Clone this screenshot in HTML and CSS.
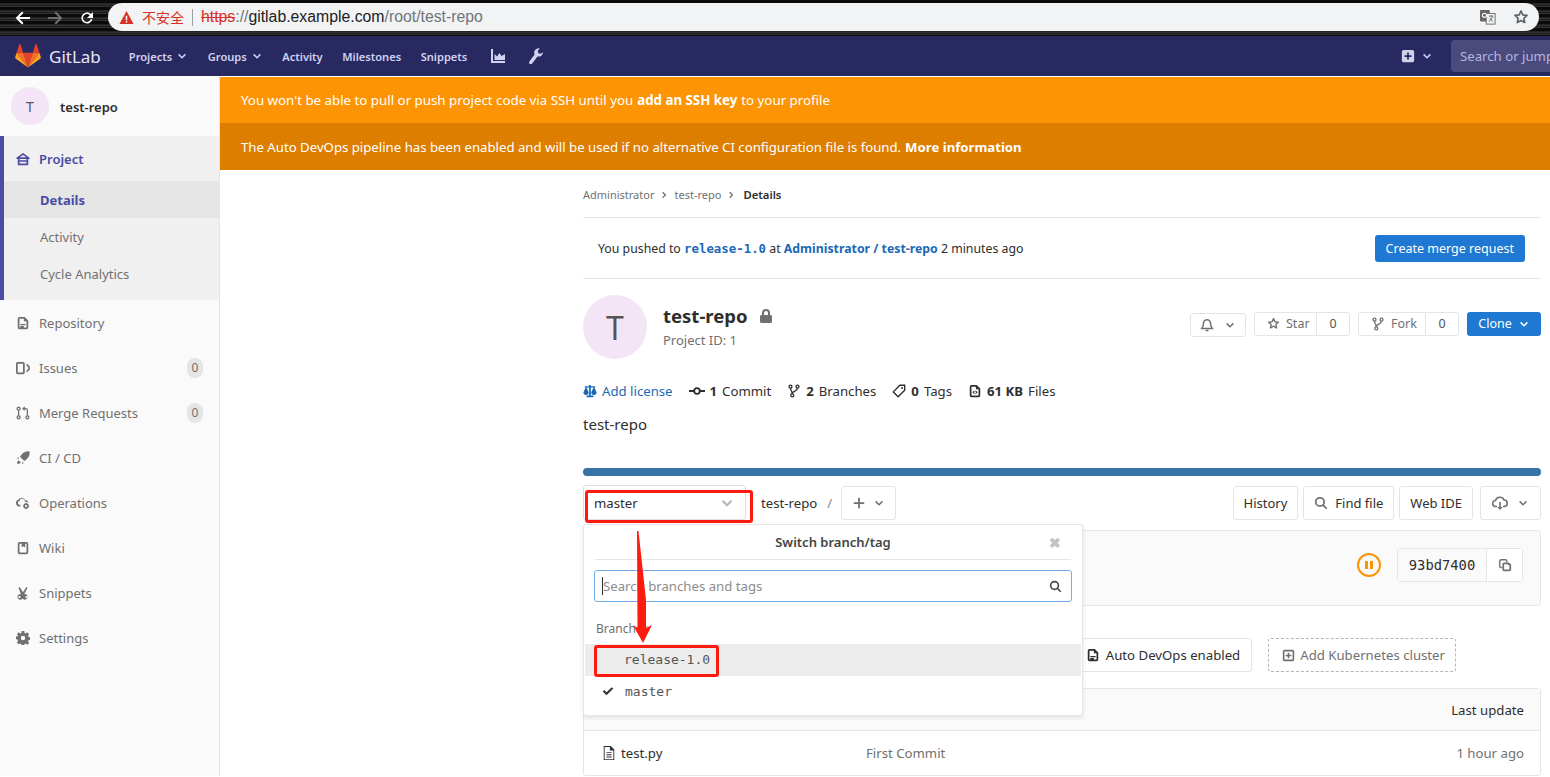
FILE: index.html
```html
<!DOCTYPE html>
<html lang="en">
<head>
  <meta charset="UTF-8" />
  <meta name="viewport" content="width=device-width, initial-scale=1.0" />
  <title>test-repo</title>
  <link rel="stylesheet" href="styles.css">
</head>
<body>
  <svg class="defs" width="0" height="0">
    <symbol id="chev" viewBox="0 0 16 16"><path d="M3.5 5.8 8 10.3l4.5-4.5" fill="none" stroke="currentColor" stroke-width="2"/></symbol>
    <symbol id="home" viewBox="0 0 16 16"><path fill-rule="evenodd" d="M8 1 .5 6.5V8H2v7h12V8h1.500V6.500zM8 3.400 11.800 6H4.200zM4 8h8v1.500H4zm0 3h8v2H4z"/></symbol>
    <symbol id="doc" viewBox="0 0 16 16"><path fill-rule="evenodd" d="M4 1h6l4 4v8a2 2 0 0 1-2 2H4a2 2 0 0 1-2-2V3a2 2 0 0 1 2-2zm0 2v10h8V6H9V3zm1 6h6v1.500H5zm0 2.500h4V13H5z"/></symbol>
    <symbol id="issues" viewBox="0 0 16 16"><path fill-rule="evenodd" d="M2 1h6a2 2 0 0 1 2 2v10a2 2 0 0 1-2 2H2a2 2 0 0 1-2-2V3a2 2 0 0 1 2-2zm0 2v10h6V3zm10 0c2.500 1 4 3 4 5s-1.500 4-4 5v-2c1-.7 2-1.800 2-3s-1-2.300-2-3z"/></symbol>
    <symbol id="merge" viewBox="0 0 16 16"><g fill="none" stroke="currentColor" stroke-width="1.500"><circle cx="3" cy="3" r="1.700"/><circle cx="3" cy="13" r="1.700"/><circle cx="13" cy="13" r="1.700"/><path d="M3 5v6M13 11V5a2 2 0 0 0-2-2H8.500"/><path d="M10 1 8 3l2 2"/></g></symbol>
    <symbol id="rocket" viewBox="0 0 16 16"><path d="M15.500.5c-4-.5-7 1-9.500 4L4.500 6.500l5 5 2-1.500c3-2.500 4.500-5.500 4-9.500zM3.500 7.500 1 8l1.500 1.500zM8.500 12.500 8 15l-1.500-1.500zM3 10.500l2.500 2.500-3 2-1.500-1.500z"/></symbol>
    <symbol id="cloudgear" viewBox="0 0 16 16"><path d="M7 2.500a4 4 0 0 1 3.700 2.500 3 3 0 0 1 3.300 2h-2a1.500 1.500 0 0 0-2-.5 2.500 2.500 0 0 0-3-3A2.500 2.500 0 0 0 4 6 2 2 0 0 0 4 10h1v2H4a4 4 0 0 1-1.500-7.700A4.500 4.500 0 0 1 7 2.500z"/><circle cx="11.500" cy="11.500" r="2.200" fill="none" stroke="currentColor" stroke-width="1.800"/><path d="M11 7.800h1v1.500h-1zM11 13.700h1v1.500h-1zM7.800 11h1.500v1H7.800zM13.700 11h1.500v1h-1.500z"/></symbol>
    <symbol id="book" viewBox="0 0 16 16"><path fill-rule="evenodd" d="M4 1h8a2 2 0 0 1 2 2v10a2 2 0 0 1-2 2H4a2 2 0 0 1-2-2V3a2 2 0 0 1 2-2zm0 2v10h8V3h-1.500v4.500L8.500 6l-2 1.500V3z"/></symbol>
    <symbol id="scissors" viewBox="0 0 16 16"><path d="M4.200 1 8 7l3.800-6 1.400 1L9.300 9.400a3.200 3.200 0 1 1-1.600 1l-.2-.4-.2.400a3.200 3.200 0 1 1-1.600-1L2.800 2z"/><circle cx="4" cy="12.600" r="1.300" fill="#fafafa"/><circle cx="12" cy="12.600" r="1.300" fill="#fafafa"/></symbol>
    <symbol id="gear" viewBox="0 0 16 16"><path fill-rule="evenodd" d="M6.500 0h3l.4 2.300 1.200.5L13 1.500 15 3.600l-1.300 1.900.5 1.200 2.300.4v3l-2.300.4-.5 1.200 1.300 1.900-2 2-2-1.300-1.200.5-.4 2.300h-3l-.4-2.300-1.200-.5L3 15 1 12.900l1.300-1.900-.5-1.200L-.5 9.400v-3l2.300-.4.500-1.200L1 3.600l2-2.100 1.900 1.300 1.200-.5zM8 5.500a2.500 2.500 0 1 0 0 5 2.500 2.500 0 0 0 0-5z"/></symbol>
    <symbol id="lock" viewBox="0 0 16 16"><path fill-rule="evenodd" d="M8 1a4 4 0 0 1 4 4v2h.5A1.500 1.500 0 0 1 14 8.500v5a1.500 1.500 0 0 1-1.500 1.500h-9A1.500 1.500 0 0 1 2 13.500v-5A1.500 1.500 0 0 1 3.500 7H4V5a4 4 0 0 1 4-4zm0 2a2 2 0 0 0-2 2v2h4V5a2 2 0 0 0-2-2z"/></symbol>
    <symbol id="scale" viewBox="0 0 16 16"><path d="M7 1h2v1.500h5V4h-1l2.500 5.500a3 3 0 0 1-6 0L12 4H9v9h3v2H4v-2h3V4H4l2.500 5.500a3 3 0 0 1-6 0L3 4H2V2.500h5z"/></symbol>
    <symbol id="commit" viewBox="0 0 16 16"><circle cx="8" cy="8" r="2.800" fill="none" stroke="currentColor" stroke-width="1.800"/><path d="M0 7h5v2H0zM11 7h5v2h-5z"/></symbol>
    <symbol id="fork" viewBox="0 0 16 16"><g fill="none" stroke="currentColor" stroke-width="1.500"><circle cx="4" cy="3" r="1.700"/><circle cx="12" cy="3" r="1.700"/><circle cx="6" cy="13" r="1.700"/><path d="M4 4.700c0 3 2 3.500 2 6.600M12 4.700C12 8 8 8 6 10"/></g></symbol>
    <symbol id="tag" viewBox="0 0 16 16"><path fill="none" stroke="currentColor" stroke-width="1.600" d="M9 1.500h5.500V7l-7.500 7.500L1.500 9z"/><circle cx="11.500" cy="4.500" r="1.100"/></symbol>
    <symbol id="files" viewBox="0 0 16 16"><path fill-rule="evenodd" d="M4 1h6l4 4v8a2 2 0 0 1-2 2H4a2 2 0 0 1-2-2V3a2 2 0 0 1 2-2zm0 2v10h8V6H9V3z"/><path d="M7 7.500 5 9.500l2 2 .8-.8-1.200-1.200 1.200-1.200zM9 7.500l2 2-2 2-.8-.8 1.200-1.200-1.200-1.200z"/></symbol>
    <symbol id="bell" viewBox="0 0 16 16"><path fill="none" stroke="currentColor" stroke-width="1.700" d="M8 2a4 4 0 0 1 4 4c0 3 .5 4 2 6H2c1.500-2 2-3 2-6a4 4 0 0 1 4-4z"/><path d="M6 13.500h4a2 2 0 0 1-4 0z"/></symbol>
    <symbol id="star" viewBox="0 0 16 16"><path fill="none" stroke="currentColor" stroke-width="1.700" stroke-linejoin="round" d="m8 2 1.800 3.900 4.200.5-3.100 2.900.8 4.200L8 11.400l-3.700 2.100.8-4.200L2 6.400l4.200-.5z"/></symbol>
    <symbol id="search" viewBox="0 0 16 16"><circle cx="6.800" cy="6.800" r="4.800" fill="none" stroke="currentColor" stroke-width="2"/><path d="m10.500 9.100 4.700 4.700-1.400 1.400-4.700-4.700z"/></symbol>
    <symbol id="cloud" viewBox="0 0 16 16"><path fill="none" stroke="currentColor" stroke-width="1.600" d="M5 11.500H4a3 3 0 0 1-.5-6A4.500 4.500 0 0 1 12 5a3.200 3.200 0 0 1 0 6.500h-1"/><path d="M7.200 7h1.600v5h2L8 15l-2.800-3h2z"/></symbol>
    <symbol id="copy" viewBox="0 0 16 16"><path fill="none" stroke="currentColor" stroke-width="1.600" d="M5 11H3.500A1.500 1.500 0 0 1 2 9.500v-6A1.500 1.500 0 0 1 3.500 2h5A1.500 1.500 0 0 1 10 3.500V5"/><path fill-rule="evenodd" d="M7 5h5.500L15 7.500V13a2 2 0 0 1-2 2H7a2 2 0 0 1-2-2V7a2 2 0 0 1 2-2zm0 2v6h6V8h-2V7z"/></symbol>
    <symbol id="plusbox" viewBox="0 0 16 16"><path fill-rule="evenodd" d="M3 1h10a2 2 0 0 1 2 2v10a2 2 0 0 1-2 2H3a2 2 0 0 1-2-2V3a2 2 0 0 1 2-2zm4 3v3H4v2h3v3h2V9h3V7H9V4z"/></symbol>
    <symbol id="plusline" viewBox="0 0 16 16"><path fill-rule="evenodd" d="M3 1h10a2 2 0 0 1 2 2v10a2 2 0 0 1-2 2H3a2 2 0 0 1-2-2V3a2 2 0 0 1 2-2zm0 2v10h10V3zm4 1.500h2V7h2.500v2H9v2.500H7V9H4.500V7H7z"/></symbol>
    <symbol id="textfile" viewBox="0 0 16 16"><path fill-rule="evenodd" d="M3 0h7l4 4v12H2V0zm0 1v14h10V5H9V1zM5 7h6v1H5zm0 2.500h6v1H5zM5 12h6v1H5z"/></symbol>
  </svg>

  <!-- browser toolbar -->
  <div class="chrome">
    <div class="chrome-btns">
      <svg class="chrome-ico" viewBox="0 0 16 16"><path d="M15 7H4.500l4-4L7 1.600 .6 8 7 14.400 8.500 13l-4-4H15z"/></svg>
      <svg class="chrome-ico off" viewBox="0 0 16 16"><path d="M1 7h10.500l-4-4L9 1.600 15.400 8 9 14.400 7.500 13l4-4H1z"/></svg>
      <svg class="chrome-ico" viewBox="0 0 16 16"><path d="M13.600 2.400 12 4a5.600 5.600 0 1 0 1.500 5.200h-1.900A3.900 3.900 0 1 1 10.700 5.300L8 8h6V2z"/></svg>
    </div>
    <div class="omnibox">
      <svg class="warn" viewBox="0 0 16 16"><path fill="#d93025" d="M8 1 .5 15h15z"/><path fill="#fff" d="M7.200 6h1.600v4.800H7.200zM7.200 11.800h1.600v1.500H7.200z"/></svg>
      <span class="unsafe">不安全</span>
      <span class="sep"></span>
      <span class="url"><s class="proto">https</s><span class="dim">://</span>gitlab.example.com<span class="dim">/root/test-repo</span></span>
      <svg class="translate" viewBox="0 0 18 18"><rect x="0" y="1" width="11" height="13" rx="1" fill="#666"/><rect x="7" y="5" width="10" height="12" fill="#f1f3f4" stroke="#666"/><path d="M10 8h5M12.500 7v1M14 8c-.5 3-2 5-4 6M11 10c.5 2 2 3 3.500 4" fill="none" stroke="#666"/><circle cx="5" cy="7" r="2.300" fill="none" stroke="#fff" stroke-width="1.200"/></svg>
      <svg class="bookmark" viewBox="0 0 16 16"><use href="#star"/></svg>
    </div>
  </div>

  <header class="navbar">
    <svg class="logo" viewBox="0 0 36 36"><path fill="#e24329" d="M18 34 24.600 13.600H11.400z"/><path fill="#fc6d26" d="M18 34 11.400 13.600H2.200z"/><path fill="#fca326" d="M2.200 13.600.2 19.800c-.2.600 0 1.200.5 1.500L18 34z"/><path fill="#e24329" d="M2.200 13.600h9.200L7.400 1.400c-.2-.6-1-.6-1.200 0z"/><path fill="#fc6d26" d="M18 34l6.600-20.400h9.200z"/><path fill="#fca326" d="M33.800 13.600l2 6.200c.2.600 0 1.200-.5 1.500L18 34z"/><path fill="#e24329" d="M33.800 13.600h-9.200l4-12.200c.2-.6 1-.6 1.200 0z"/></svg>
    <span class="brand">GitLab</span>
    <nav class="nav-links">
      <a class="nav-link">Projects <svg class="ico-12"><use href="#chev"/></svg></a>
      <a class="nav-link">Groups <svg class="ico-12"><use href="#chev"/></svg></a>
      <a class="nav-link">Activity</a>
      <a class="nav-link">Milestones</a>
      <a class="nav-link">Snippets</a>
      <a class="nav-link nav-icon"><svg class="ico-16" viewBox="0 0 16 16"><path d="M1 1h2v12h12v2H1zM4.500 6l2.500 2.500L9.500 5l2 3 3.500-2v6H4.500z"/></svg></a>
      <a class="nav-link nav-icon"><svg class="ico-16" viewBox="0 0 16 16"><path d="M15 4.300A4.300 4.300 0 0 1 9.500 8.400L4.200 15.500a1.700 1.700 0 0 1-2.800-2L6.600 6.500A4.300 4.300 0 0 1 11.800.6L9.700 3l.7 2.200 2.200.6z"/></svg></a>
    </nav>
    <div class="nav-right">
      <svg class="ico-14"><use href="#plusbox"/></svg>
      <svg class="ico-12"><use href="#chev"/></svg>
      <div class="nav-search">Search or jump</div>
    </div>
  </header>

  <div class="layout">
    <aside class="sidebar">
      <div class="side-head">
        <span class="side-avatar">T</span>
        <span class="side-title">test-repo</span>
      </div>
      <div class="side-active">
        <a class="side-item current"><svg class="ico-14"><use href="#home"/></svg>Project</a>
        <a class="side-sub selected">Details</a>
        <a class="side-sub">Activity</a>
        <a class="side-sub">Cycle Analytics</a>
      </div>
      <a class="side-item"><svg class="ico-14"><use href="#doc"/></svg>Repository</a>
      <a class="side-item"><svg class="ico-14"><use href="#issues"/></svg>Issues<span class="badge">0</span></a>
      <a class="side-item"><svg class="ico-14"><use href="#merge"/></svg>Merge Requests<span class="badge">0</span></a>
      <a class="side-item"><svg class="ico-14"><use href="#rocket"/></svg>CI / CD</a>
      <a class="side-item"><svg class="ico-14"><use href="#cloudgear"/></svg>Operations</a>
      <a class="side-item"><svg class="ico-14"><use href="#book"/></svg>Wiki</a>
      <a class="side-item"><svg class="ico-14"><use href="#scissors"/></svg>Snippets</a>
      <a class="side-item"><svg class="ico-14"><use href="#gear"/></svg>Settings</a>
    </aside>

    <main class="main">
      <div class="banner warn-one">You won't be able to pull or push project code via SSH until you <b>add an SSH key</b> to your profile</div>
      <div class="banner warn-two">The Auto DevOps pipeline has been enabled and will be used if no alternative CI configuration file is found. <b>More information</b></div>

      <div class="content">
        <div class="crumbs">
          <span>Administrator</span><svg class="crumb-sep"><use href="#chev"/></svg><span>test-repo</span><svg class="crumb-sep"><use href="#chev"/></svg><b>Details</b>
        </div>

        <div class="pushed">
          <span>You pushed to <code class="mono-link">release-1.0</code> at <b class="link">Administrator / test-repo</b> 2 minutes ago</span>
          <a class="btn-blue">Create merge request</a>
        </div>

        <div class="project-head">
          <span class="big-avatar">T</span>
          <div class="project-name">
            <h1>test-repo <svg class="lock"><use href="#lock"/></svg></h1>
            <p>Project ID: 1</p>
          </div>
          <div class="project-actions">
            <a class="btn bell"><svg class="ico-14"><use href="#bell"/></svg><svg class="ico-12"><use href="#chev"/></svg></a>
            <div class="btn-pair">
              <a class="btn"><svg class="ico-13"><use href="#star"/></svg>Star</a><span class="count">0</span>
            </div>
            <div class="btn-pair">
              <a class="btn"><svg class="ico-14"><use href="#fork"/></svg>Fork</a><span class="count">0</span>
            </div>
            <a class="btn-blue clone">Clone <svg class="ico-12"><use href="#chev"/></svg></a>
          </div>
        </div>

        <div class="stats">
          <span class="stat link"><svg class="ico-14"><use href="#scale"/></svg>Add license</span>
          <span class="stat"><svg class="ico-16"><use href="#commit"/></svg><b>1</b> Commit</span>
          <span class="stat"><svg class="ico-14"><use href="#fork"/></svg><b>2</b> Branches</span>
          <span class="stat"><svg class="ico-14"><use href="#tag"/></svg><b>0</b> Tags</span>
          <span class="stat"><svg class="ico-14"><use href="#files"/></svg><b>61 KB</b> Files</span>
        </div>

        <p class="descr">test-repo</p>
        <div class="lang-bar"></div>

        <div class="tree-bar">
          <a class="branch-select">master <svg class="ico-16"><use href="#chev"/></svg></a>
          <span class="tree-path">test-repo</span>
          <span class="tree-slash">/</span>
          <a class="btn tall plus"><svg class="ico-14" viewBox="0 0 16 16"><path d="M7 2h2v5h5v2H9v5H7V9H2V7h5z"/></svg><svg class="ico-12"><use href="#chev"/></svg></a>
          <div class="tree-right">
            <a class="btn tall">History</a>
            <a class="btn tall"><svg class="ico-14"><use href="#search"/></svg>Find file</a>
            <a class="btn tall">Web IDE</a>
            <a class="btn tall cloud-btn"><svg class="ico-16"><use href="#cloud"/></svg><svg class="ico-12"><use href="#chev"/></svg></a>
          </div>
        </div>

        <div class="commit-box">
          <span class="pause"><i></i><i></i></span>
          <div class="sha-group">
            <span class="sha">93bd7400</span>
            <span class="sha-copy"><svg class="ico-14"><use href="#copy"/></svg></span>
          </div>
        </div>

        <div class="stat-btns">
          <a class="btn tall"><svg class="ico-14 dark"><use href="#doc"/></svg>Auto DevOps enabled</a>
          <a class="btn tall dashed"><svg class="ico-13"><use href="#plusline"/></svg>Add Kubernetes cluster</a>
        </div>

        <div class="files">
          <div class="files-head">Last update</div>
          <div class="files-row">
            <span class="file-name"><svg class="ico-14 dark"><use href="#textfile"/></svg>test.py</span>
            <span class="file-msg">First Commit</span>
            <span class="file-time">1 hour ago</span>
          </div>
        </div>

        <!-- branch dropdown, open over the page -->
        <div class="dropdown">
          <div class="dd-title">Switch branch/tag <span class="dd-close">✖</span></div>
          <div class="dd-search">
            <span class="caret"></span>Search branches and tags
            <svg class="ico-13"><use href="#search"/></svg>
          </div>
          <div class="dd-label">Branches</div>
          <div class="dd-item hover">release-1.0</div>
          <div class="dd-item"><svg class="check" viewBox="0 0 16 16"><path d="M1 8.500 3 6.500 6 9.500 13 3l2 2-9 8.500z"/></svg>master</div>
        </div>
      </div>
    </main>
  </div>

  <!-- red annotations drawn on the screenshot -->
  <div class="mark mark-one"></div>
  <div class="mark mark-two"></div>
  <svg class="arrow" viewBox="0 0 30 120"><path d="M9 0H10.500L18 69V97L24 94 15 112 5 94 9.500 97z" fill="#ff1a0f"/></svg>
</body>
</html>
```

FILE: styles.css
```css
* {
  box-sizing: border-box;
}

body {
  margin: 0;
  width: 1550px;
  height: 777px;
  overflow: hidden;
  position: relative;
  background-color: #fff;
  font-family: "Noto Sans", sans-serif;
  font-size: 14px;
  color: #2e2e2e;
}

.defs {
  position: absolute;
}

svg {
  fill: currentColor;
  flex: none;
}

.ico-12 { width: 12px; height: 12px; }
.ico-13 { width: 13px; height: 13px; }
.ico-14 { width: 14px; height: 14px; }
.ico-16 { width: 16px; height: 16px; }

b {
  font-weight: 700;
}

.link {
  color: #1b69b6;
}

/* Browser toolbar */
.chrome {
  height: 36px;
  display: flex;
  align-items: center;
  padding-right: 11px;
  background: repeating-linear-gradient(to bottom, #0a0a0a 0, #0a0a0a 3px, #3c3c3c 4px, #111 6px, #555 7px);
}

.chrome-btns {
  width: 108px;
  display: flex;
  gap: 16px;
  padding-left: 15px;
  color: #fff;
}

.chrome-ico {
  width: 16px;
  height: 16px;
}

.chrome-ico.off {
  color: #6e6e6e;
}

.omnibox {
  flex: 1;
  height: 28px;
  margin-top: -2px;
  display: flex;
  align-items: center;
  padding: 0 10px 0 11px;
  background-color: #f1f3f4;
  border-radius: 14px;
  font-family: "Liberation Sans", "Noto Sans CJK SC", sans-serif;
  font-size: 15.800px;
  color: #202124;
}

.warn {
  width: 15px;
  height: 15px;
}

.unsafe {
  margin-left: 8px;
  font-family: "Noto Sans CJK SC", sans-serif;
  font-size: 14px;
  color: #d93025;
}

.sep {
  width: 1px;
  height: 17px;
  margin: 0 8px 0 8px;
  background-color: #9aa0a6;
}

.url {
  flex: 1;
}

.proto {
  color: #d93025;
}

.dim {
  color: #70757a;
}

.translate {
  width: 16px;
  height: 16px;
  margin-right: 17px;
}

.bookmark {
  width: 16px;
  height: 16px;
  color: #5f6368;
}

/* Top navbar */
.navbar {
  height: 40px;
  display: flex;
  align-items: center;
  padding-left: 15px;
  background-color: #292961;
  color: #d1d1f0;
}

.logo {
  width: 26px;
  height: 26px;
}

.brand {
  margin-left: 8px;
  font-size: 17px;
  color: #e6e6f5;
}

.nav-links {
  display: flex;
  align-items: center;
  gap: 19.500px;
  margin-left: 28px;
}

.nav-link {
  display: flex;
  align-items: center;
  gap: 4px;
  font-size: 11.100px;
  font-weight: 600;
}

.nav-icon {
  margin-left: 3px;
}

.nav-right {
  margin-left: auto;
  display: flex;
  align-items: center;
  gap: 6px;
}

.nav-search {
  width: 99px;
  height: 32px;
  margin-left: 12px;
  padding: 6px 0 6px 9px;
  overflow: hidden;
  background-color: #4a4a7c;
  border-radius: 4px 0 0 4px;
  font-size: 13.200px;
  line-height: 20px;
  color: #b5b5e0;
  white-space: nowrap;
}

/* Layout */
.layout {
  display: flex;
  margin-top: 1px;
}

.sidebar {
  width: 220px;
  height: 700px;
  flex: none;
  margin-top: -1px;
  background-color: #fafafa;
  border-right: 1px solid #e5e5e5;
  font-size: 13px;
  color: #707070;
}

.side-head {
  height: 60px;
  display: flex;
  align-items: center;
  padding-left: 11px;
}

.side-avatar {
  width: 38px;
  height: 38px;
  display: flex;
  align-items: center;
  justify-content: center;
  background-color: #f3e5f5;
  border: 1px solid #f0e8f2;
  border-radius: 50%;
  font-size: 14px;
  color: #555;
}

.side-title {
  margin-left: 11px;
  padding-top: 2px;
  font-weight: 600;
  color: #2e2e2e;
}

.side-active {
  height: 164px;
  background-color: #f0f0f0;
  border-left: 4px solid #4b4ba3;
}

.side-item {
  height: 45px;
  display: flex;
  align-items: center;
  padding: 0 16px;
  gap: 9px;
}

.side-active .side-item {
  padding-left: 12px;
}

.side-item.current {
  color: #4b4ba3;
  font-weight: 600;
}

.side-sub {
  height: 37px;
  display: flex;
  align-items: center;
  padding-left: 36px;
}

.side-sub.selected {
  background-color: #e5e5e5;
  color: #4b4ba3;
  font-weight: 700;
}

.badge {
  margin-left: auto;
  width: 16px;
  height: 20px;
  display: flex;
  align-items: center;
  justify-content: center;
  background-color: #e5e5e5;
  border-radius: 8px;
  font-size: 12px;
}

.main {
  flex: 1;
  min-width: 0;
}

.banner {
  display: flex;
  align-items: center;
  gap: 0.3em;
  padding-left: 21px;
  color: #fff;
}

.warn-one {
  height: 46px;
  background-color: #fc9403;
  font-size: 13.300px;
}

.warn-two {
  height: 47px;
  background-color: #de7e00;
  font-size: 13.200px;
}

/* Page content */
.content {
  position: relative;
  height: 607px;
  margin-left: 363px;
  margin-right: 9px;
  font-size: 13.200px;
}

.crumbs {
  height: 48px;
  display: flex;
  align-items: center;
  padding-top: 2px;
  border-bottom: 1px solid #e5e5e5;
  font-size: 11px;
  color: #707070;
}

.crumbs b {
  font-size: 11.300px;
  font-weight: 600;
  color: #2e2e2e;
}

.crumb-sep {
  width: 10px;
  height: 10px;
  margin: 0 5px;
  transform: rotate(-90deg);
}

.crumb-sep:last-of-type {
  margin-right: 7px;
}

.pushed {
  height: 61px;
  display: flex;
  align-items: center;
  justify-content: space-between;
  padding: 0 16px 0 15px;
  border-bottom: 1px solid #e5e5e5;
  font-size: 12.300px;
}

.mono-link {
  font-family: "DejaVu Sans Mono", monospace;
  font-size: 12.400px;
  font-weight: 700;
  color: #1b69b6;
}

.btn-blue {
  display: flex;
  align-items: center;
  justify-content: center;
  gap: 6px;
  height: 27px;
  padding: 0 11px;
  background-color: #1f78d1;
  border-radius: 3px;
  font-size: 12.500px;
  color: #fff;
}

.project-head {
  display: flex;
  margin-top: 16px;
}

.big-avatar {
  width: 64px;
  height: 64px;
  display: flex;
  align-items: center;
  justify-content: center;
  background-color: #f3e5f5;
  border-radius: 50%;
  font-size: 32px;
  color: #555;
}

.project-name {
  margin-left: 16px;
}

.project-name h1 {
  margin: 6px 0 0;
  display: flex;
  align-items: center;
  gap: 4px;
  font-size: 18.500px;
  line-height: 30px;
  font-weight: 700;
}

.lock {
  width: 16px;
  height: 16px;
  margin-left: 6px;
  color: #707070;
}

.project-name p {
  margin: 0;
  font-size: 13px;
  line-height: 18px;
  color: #707070;
}

.project-actions {
  margin-left: auto;
  height: 25px;
  margin-top: 16px;
  display: flex;
  align-items: center;
  gap: 8px;
  font-size: 12.500px;
}

.btn {
  height: 24px;
  display: flex;
  align-items: center;
  gap: 7px;
  padding: 0 12px;
  background-color: #fff;
  border: 1px solid #e5e5e5;
  border-radius: 3px;
  color: #707070;
  white-space: nowrap;
}

.btn.tall {
  height: 34px;
  color: #2e2e2e;
}

.btn.tall > svg {
  color: #707070;
}

.btn.bell {
  margin-top: 2px;
  width: 56px;
  justify-content: center;
  gap: 10px;
  color: #707070;
}

.btn-pair {
  display: flex;
}

.btn-pair .btn {
  width: 63px;
  padding: 0 0 0 12px;
  gap: 6px;
  border-radius: 3px 0 0 3px;
}

.btn-pair + .btn-pair .btn {
  width: 68px;
}

.count {
  width: 33px;
  height: 24px;
  display: flex;
  align-items: center;
  justify-content: center;
  border: 1px solid #e5e5e5;
  border-left: 0;
  border-radius: 0 3px 3px 0;
  color: #555;
}

.btn-blue.clone {
  width: 74px;
  height: 24px;
}

.stats {
  display: flex;
  align-items: center;
  gap: 16px;
  margin-top: 23px;
  height: 18px;
}

.stat {
  display: flex;
  align-items: center;
  gap: 5px;
}

.descr {
  margin: 14px 0 0;
  font-size: 15px;
  line-height: 20px;
}

.lang-bar {
  height: 8px;
  margin-top: 34px;
  background-color: #3572a5;
  border-radius: 4px;
}

.tree-bar {
  display: flex;
  align-items: center;
  margin-top: 9px;
}

.branch-select {
  width: 163px;
  height: 35px;
  display: flex;
  align-items: center;
  justify-content: space-between;
  padding: 0 10px;
  border: 1px solid #dfdfdf;
  border-radius: 3px;
}

.branch-select svg {
  color: #b5b5b5;
}

.tree-path {
  margin-left: 15px;
}

.tree-slash {
  margin: 0 9px 0 10px;
  color: #888;
}

.btn.plus {
  gap: 7px;
  padding: 0 10px;
}

.tree-right {
  margin-left: auto;
  display: flex;
  gap: 5px;
  font-size: 13px;
}

.tree-right .btn {
  padding: 0 10px;
  gap: 7px;
}

.tree-right .btn.cloud-btn {
  margin-left: 2px;
  gap: 9px;
  padding: 0 11px;
}

.commit-box {
  height: 76px;
  margin-top: 10px;
  display: flex;
  align-items: center;
  justify-content: flex-end;
  padding-right: 17px;
  padding-bottom: 7px;
  background-color: #fafafa;
  border: 1px solid #e5e5e5;
  border-radius: 3px;
}

.pause {
  width: 24px;
  height: 24px;
  display: flex;
  align-items: center;
  justify-content: center;
  gap: 2px;
  border: 2px solid #fc9403;
  border-radius: 50%;
}

.pause i {
  width: 3px;
  height: 8px;
  background-color: #fc9403;
}

.sha-group {
  display: flex;
  height: 34px;
  margin-left: 16px;
  border: 1px solid #e5e5e5;
  border-radius: 3px;
}

.sha {
  width: 89px;
  display: flex;
  align-items: center;
  justify-content: center;
  background-color: #fafafa;
  border-right: 1px solid #e5e5e5;
  font-family: "DejaVu Sans Mono", monospace;
  font-size: 13.800px;
}

.sha-copy {
  width: 35px;
  display: flex;
  align-items: center;
  justify-content: center;
  background-color: #fff;
  color: #707070;
}

.stat-btns {
  display: flex;
  justify-content: flex-end;
  gap: 16px;
  padding-right: 85px;
  margin-top: 32px;
}

.stat-btns .btn {
  gap: 6px;
  padding: 0 11px;
}

.stat-btns .btn.dashed {
  gap: 5px;
  padding: 0 10px 0 13px;
  border-style: dashed;
  border-color: #b5b5b5;
  color: #707070;
}

.btn.tall > svg.dark {
  color: #2e2e2e;
}

.files {
  margin-top: 16px;
  border: 1px solid #e5e5e5;
  border-radius: 3px;
}

.files-head {
  height: 42px;
  display: flex;
  align-items: center;
  justify-content: flex-end;
  padding-right: 16px;
  background-color: #fafafa;
  border-bottom: 1px solid #e5e5e5;
}

.files-row {
  height: 44px;
  display: flex;
  align-items: center;
  padding: 0 16px 0 18px;
}

.file-name {
  width: 264px;
  display: flex;
  align-items: center;
  gap: 5px;
}

.file-msg,
.file-time {
  color: #707070;
}

.file-time {
  margin-left: auto;
}

/* Branch dropdown */
.dropdown {
  position: absolute;
  left: 0;
  top: 354px;
  width: 500px;
  height: 192px;
  padding: 0 1px;
  background-color: #fff;
  border: 1px solid #e5e5e5;
  border-radius: 3px;
  box-shadow: 0 2px 4px rgba(0, 0, 0, 0.1);
}

.dd-title {
  position: relative;
  height: 35px;
  margin: 0 10px;
  display: flex;
  align-items: center;
  justify-content: center;
  border-bottom: 1px solid #e5e5e5;
  font-weight: 600;
  font-size: 13px;
  color: #444;
}

.dd-close {
  position: absolute;
  right: 10px;
  font-size: 14px;
  color: #c4c4c4;
}

.dd-search {
  height: 32px;
  margin: 10px 9px 0;
  display: flex;
  align-items: center;
  padding: 0 9px 0 7px;
  border: 1px solid #73afea;
  border-radius: 3px;
  color: #8c8c8c;
}

.caret {
  width: 1px;
  height: 18px;
  background-color: #333;
}

.dd-search svg {
  margin-left: auto;
  color: #444;
}

.dd-label {
  height: 42px;
  display: flex;
  align-items: center;
  padding: 10px 0 0 11px;
  font-size: 12px;
  color: #707070;
}

.dd-item {
  height: 32px;
  display: flex;
  align-items: center;
  padding: 0 0 2px 39px;
  font-family: "DejaVu Sans Mono", monospace;
  font-size: 13px;
  color: #555;
}

.dd-item.hover {
  background-color: #ececec;
}

.check {
  width: 12px;
  height: 12px;
  margin-left: -22px;
  margin-right: 11px;
  color: #333;
}

/* Annotations */
.mark {
  position: absolute;
  border: 3px solid #ff1a0f;
  border-radius: 3px;
}

.mark-one {
  left: 585px;
  top: 490px;
  width: 168px;
  height: 33px;
}

.mark-two {
  left: 594px;
  top: 645px;
  width: 125px;
  height: 32px;
}

.arrow {
  position: absolute;
  left: 628px;
  top: 531px;
  width: 30px;
  height: 120px;
}
```
